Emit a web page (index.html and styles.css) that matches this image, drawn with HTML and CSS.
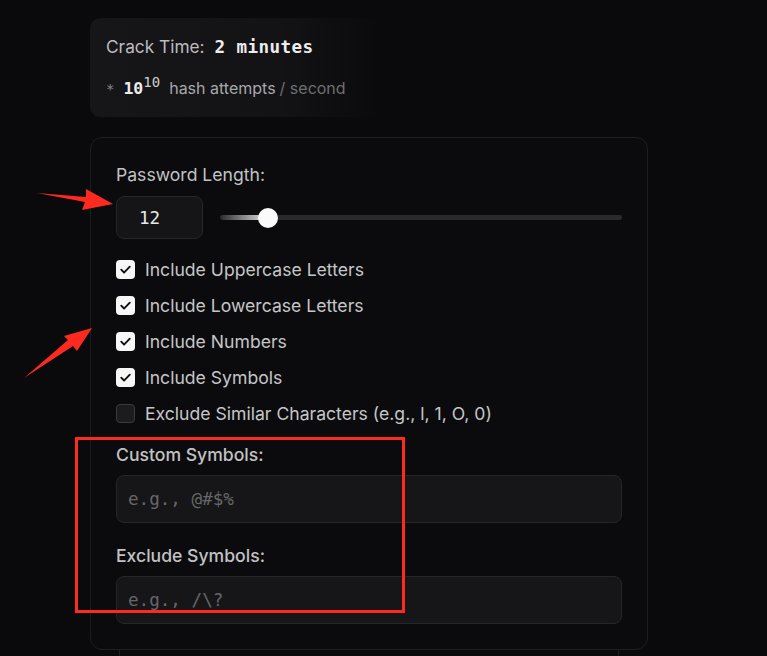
FILE: index.html
```html
<!DOCTYPE html>
<html>
<head>
<meta charset="utf-8">
<link rel="stylesheet" href="styles.css">
</head>
<body>
<div class="page">
  <div class="crack">
    <div class="crack-row"><span class="crack-label">Crack Time:</span> <span class="crack-val">2 minutes</span></div>
    <div class="rate-row"><span class="star">*</span><span class="pow">10<sup>10</sup></span><span class="rate">hash attempts</span> <span class="per">/ second</span></div>
  </div>

  <div class="card">
    <div class="label">Password Length:</div>
    <div class="len-row">
      <div class="num">12</div>
      <div class="slider">
        <div class="fill"></div>
        <div class="thumb"></div>
      </div>
    </div>
    <div class="checks">
      <div class="check"><span class="box on"><svg viewBox="0 0 20 20" width="19" height="19"><path d="M5.5 10.2l3 3 6-6.2" fill="none" stroke="#111" stroke-width="2" stroke-linecap="round" stroke-linejoin="round"/></svg></span>Include Uppercase Letters</div>
      <div class="check"><span class="box on"><svg viewBox="0 0 20 20" width="19" height="19"><path d="M5.5 10.2l3 3 6-6.2" fill="none" stroke="#111" stroke-width="2" stroke-linecap="round" stroke-linejoin="round"/></svg></span>Include Lowercase Letters</div>
      <div class="check"><span class="box on"><svg viewBox="0 0 20 20" width="19" height="19"><path d="M5.5 10.2l3 3 6-6.2" fill="none" stroke="#111" stroke-width="2" stroke-linecap="round" stroke-linejoin="round"/></svg></span>Include Numbers</div>
      <div class="check"><span class="box on"><svg viewBox="0 0 20 20" width="19" height="19"><path d="M5.5 10.2l3 3 6-6.2" fill="none" stroke="#111" stroke-width="2" stroke-linecap="round" stroke-linejoin="round"/></svg></span>Include Symbols</div>
      <div class="check"><span class="box off"></span>Exclude Similar Characters (e.g., l, 1, O, 0)</div>
    </div>
    <div class="field">
      <div class="label strong">Custom Symbols:</div>
      <div class="input">e.g., @#$%</div>
    </div>
    <div class="field">
      <div class="label strong">Exclude Symbols:</div>
      <div class="input">e.g., /\?</div>
    </div>
  </div>
  <div class="next"></div>
</div>

<svg class="notes" width="767" height="656" viewBox="0 0 767 656">
  <polygon points="37,193 86,197 86,189 113,204 82,210 85,202" fill="#ff2a1f"/>
  <polygon points="24,378 68,340 64,336 92,328 77,351 73,346" fill="#ff2a1f"/>
  <rect x="76.5" y="438.5" width="327" height="173" fill="none" stroke="#ff2a1f" stroke-width="3"/>
</svg>
</body>
</html>
```

FILE: styles.css
```css
html, body {
  margin: 0;
  padding: 0;
  background: #0a0a0c;
  height: 100%;
  overflow: hidden;
}
body {
  font-family: Inter, "Noto Sans", sans-serif;
  color: #c4c4c6;
}
.page {
  width: 558px;
  margin-left: 90px;
  padding-top: 18px;
}
.crack {
  height: 99px;
  box-sizing: border-box;
  width: 290px;
  padding: 19px 16px 0 16px;
  border-radius: 10px;
  background: linear-gradient(90deg, #161618 0%, #131315 65%, rgba(10,10,12,0) 100%);
}
.crack-row {
  font-size: 17.3px;
  line-height: 20px;
  height: 20px;
  white-space: nowrap;
}
.crack-label { color: #bdbdbf; }
.crack-val {
  font-family: "DejaVu Sans Mono", monospace;
  font-weight: bold;
  color: #ececec;
  font-size: 17.6px;
  margin-left: 5px;
  letter-spacing: 0.4px;
}
.rate-row {
  margin-top: 21px;
  font-size: 16px;
  line-height: 20px;
  white-space: nowrap;
  display: flex;
  align-items: baseline;
}
.star {
  color: #8a8a8c;
  font-size: 14px;
  font-family: "DejaVu Sans Mono", monospace;
  margin-right: 9px;
}
.pow {
  font-family: "DejaVu Sans Mono", monospace;
  font-weight: bold;
  color: #ececec;
  font-size: 16.5px;
  margin-right: 9px;
}
.pow sup {
  font-weight: normal;
  font-size: 14px;
  color: #cfcfcf;
  vertical-align: 7px;
  line-height: 0;
}
.rate { color: #a8a8aa; margin-right: 4px; }
.per { color: #6e6e72; }

.card {
  margin-top: 20px;
  border: 1px solid #1e1e21;
  border-radius: 12px;
  background: #0b0b0d;
  padding: 25px 25px 26px 25px;
  height: 513px;
  box-sizing: border-box;
}
.label {
  font-size: 17.6px;
  line-height: 24px;
  color: #c2c2c4;
}
.label.strong { font-weight: 500; }
.len-row {
  display: flex;
  align-items: center;
  gap: 17px;
  margin-top: 9px;
}
.num {
  width: 87px;
  height: 43px;
  box-sizing: border-box;
  border: 1px solid #26262a;
  background: #151517;
  border-radius: 8px;
  font-family: "DejaVu Sans Mono", monospace;
  font-size: 17.6px;
  color: #e8e8e8;
  display: flex;
  align-items: center;
  padding-left: 22px;
}
.slider {
  position: relative;
  flex: 1;
  height: 5px;
  border-radius: 3px;
  background: #2a2a2d;
}
.fill {
  position: absolute;
  left: 0; top: 0; bottom: 0;
  width: 48px;
  border-radius: 3px;
  background: linear-gradient(90deg, rgba(255,255,255,0) 0%, #e8e8e8 100%);
}
.thumb {
  position: absolute;
  left: 38px;
  top: -7.5px;
  width: 20px;
  height: 20px;
  border-radius: 50%;
  background: #fafafa;
}
.checks {
  margin-top: 18px;
  display: flex;
  flex-direction: column;
  gap: 12px;
}
.check {
  display: flex;
  align-items: center;
  gap: 10px;
  height: 24px;
  font-size: 17.6px;
  color: #c6c6c8;
  white-space: nowrap;
}
.box {
  width: 19px;
  height: 19px;
  box-sizing: border-box;
  border-radius: 4px;
  flex: none;
  display: flex;
}
.box.on { background: #f7f7f7; }
.box.off { background: #1c1c1f; border: 1.5px solid #3a3a3e; }
.field { margin-top: 18px; }
.field + .field { margin-top: 21px; }
.input {
  margin-top: 8px;
  height: 48px;
  box-sizing: border-box;
  border: 1px solid #26262a;
  background: #161618;
  border-radius: 8px;
  font-family: "DejaVu Sans Mono", monospace;
  font-size: 17.6px;
  color: #66666a;
  display: flex;
  align-items: center;
  padding-left: 11px;
}
.next {
  margin: -1px 29px 0 29px;
  height: 20px;
  border-left: 1px solid #1e1e21;
  border-right: 1px solid #1e1e21;
}
.notes {
  position: absolute;
  left: 0;
  top: 0;
  pointer-events: none;
}
```
